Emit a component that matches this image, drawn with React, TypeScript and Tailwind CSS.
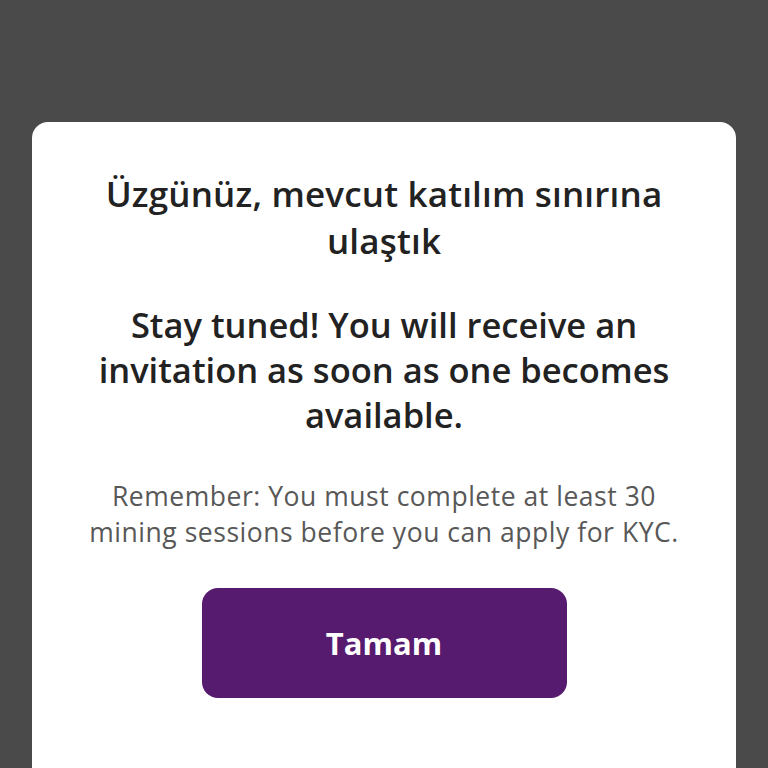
export default function App() {
  return (
    <div
      className="h-[768px] w-[768px] overflow-hidden bg-[#4a4a4a] pt-[122px] px-8"
      style={{ fontFamily: '"Open Sans", "Noto Sans", sans-serif' }}
    >
      <div className="flex h-[680px] flex-col items-center rounded-[16px] bg-white px-[40px] pt-[48px] text-center">
        <h1 className="text-[35px] font-semibold leading-[47px] tracking-[0.005em] text-[#222222]">
          Üzgünüz, mevcut katılım sınırına
          <br />
          ulaştık
        </h1>
        <h2 className="mt-[38px] text-[34.5px] font-semibold leading-[45px] text-[#222222]">
          Stay tuned! You will receive an
          <br />
          invitation as soon as one becomes
          <br />
          available.
        </h2>
        <p className="mt-[41px] text-[26.5px] leading-[36px] tracking-[0.02em] text-[#585858]">
          Remember: You must complete at least 30
          <br />
          mining sessions before you can apply for KYC.
        </p>
        <button className="mt-[38px] flex h-[110px] w-[365px] items-center justify-center rounded-[16px] bg-[#561b6e] text-[31px] font-bold text-white">
          Tamam
        </button>
      </div>
    </div>
  );
}
